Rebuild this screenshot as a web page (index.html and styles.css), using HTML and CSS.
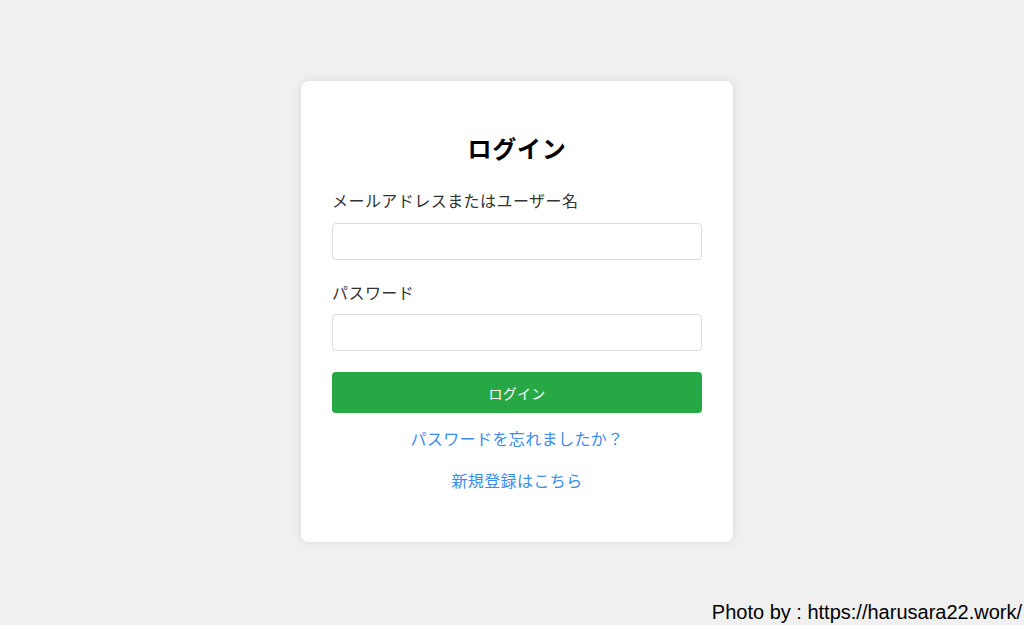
FILE: index.html
```html
<!DOCTYPE html>
<html lang="ja">
<head>
<meta charset="utf-8">
<title>ログイン</title>
<link rel="stylesheet" href="styles.css">
</head>
<body>
<main class="page">
  <form class="card">
    <h2 class="title">ログイン</h2>
    <label class="label" for="user">メールアドレスまたはユーザー名</label>
    <input class="field" id="user" type="text">
    <label class="label label-second" for="pass">パスワード</label>
    <input class="field" id="pass" type="password">
    <button class="btn" type="button">ログイン</button>
    <a class="link link-first" href="#">パスワードを忘れましたか？</a>
    <a class="link link-second" href="#">新規登録はこちら</a>
  </form>
</main>
<footer class="credit">Photo by : https://harusara22.work/</footer>
</body>
</html>
```

FILE: styles.css
```css
* { box-sizing: border-box; }
html, body { margin: 0; padding: 0; }
body {
  width: 1024px;
  height: 625px;
  background: #f0f0f0;
  font-family: "Noto Sans CJK JP", "Noto Sans", sans-serif;
  color: #333;
  position: relative;
  overflow: hidden;
}
.page {
  display: flex;
  justify-content: center;
  padding-top: 81px;
  padding-left: 10px;
}
.card {
  width: 432px;
  background: #fff;
  border-radius: 8px;
  box-shadow: 0 0 10px rgba(0, 0, 0, 0.1);
  padding: 50px 31px 50px;
  display: flex;
  flex-direction: column;
}
.title {
  margin: 0 0 23px;
  font-size: 24px;
  line-height: 34px;
  font-weight: bold;
  color: #000;
  text-align: center;
  letter-spacing: 0.7px;
}
.label {
  font-size: 16px;
  line-height: 24px;
  margin-bottom: 11px;
  color: #333;
  letter-spacing: 0.45px;
}
.label-second { margin-top: 20px; margin-bottom: 10px; }
.field {
  width: 370px;
  height: 37px;
  border: 1px solid #ddd;
  border-radius: 4px;
  background: #fff;
  font-size: 16px;
  padding: 0 10px;
  outline: none;
}
.btn {
  margin-top: 21px;
  height: 41px;
  width: 370px;
  border: none;
  border-radius: 4px;
  background: #28a745;
  color: #fff;
  font-family: "Noto Sans CJK JP", "Noto Sans", sans-serif;
  font-size: 14px;
  letter-spacing: 0.3px;
}
.link {
  display: block;
  text-align: center;
  font-size: 16px;
  line-height: 24px;
  color: #3b8ced;
  text-decoration: none;
  letter-spacing: 0.4px;
}
.link-first { margin-top: 13px; }
.link-second { margin-top: 18px; }
.credit {
  position: absolute;
  right: 2px;
  bottom: 0;
  font-family: "Liberation Sans", Arial, sans-serif;
  font-size: 20px;
  line-height: 25px;
  color: #000;
}
```
